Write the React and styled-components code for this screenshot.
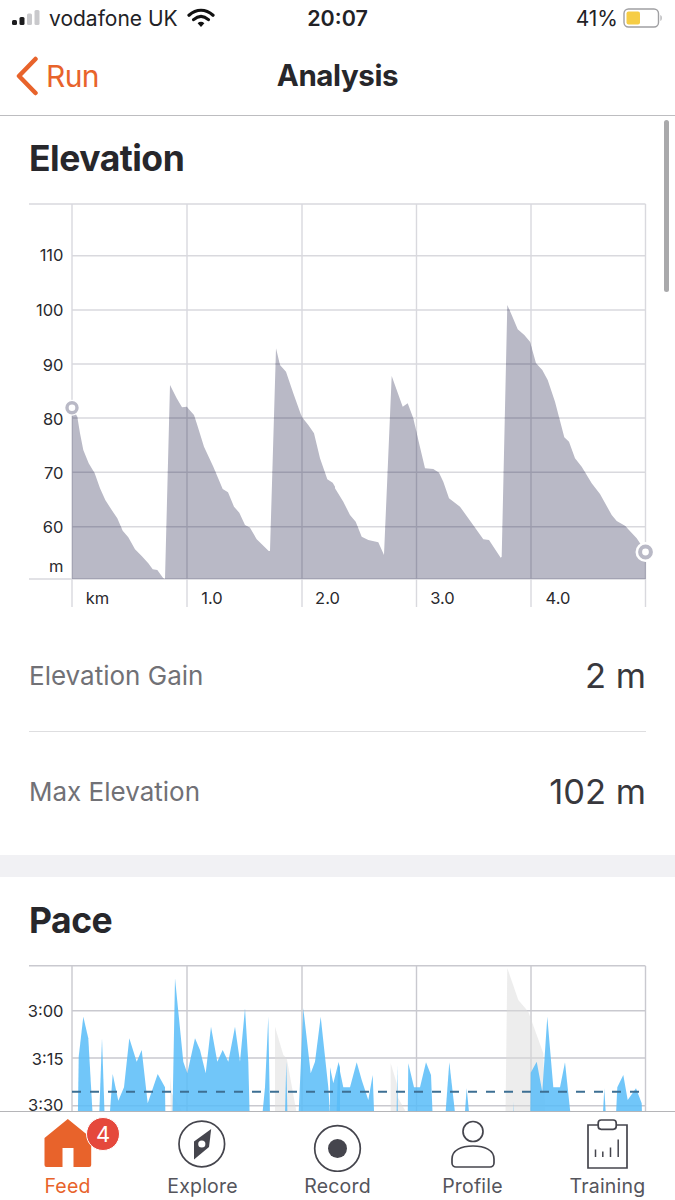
import React from "react";
import styled, { createGlobalStyle } from "styled-components";

const Global = createGlobalStyle`
  html, body { margin: 0; padding: 0; background: #fff; }
  body { font-family: Inter, "Liberation Sans", sans-serif; }
`;

const ORANGE = "#e8632b";
const INK = "#45454d";

const Page = styled.div`
  position: relative;
  width: 675px;
  height: 1200px;
  display: flex;
  flex-direction: column;
  overflow: hidden;
  background: #fff;
`;
const StatusBar = styled.div`
  height: 39px;
  box-sizing: border-box;
  display: grid;
  grid-template-columns: 1fr auto 1fr;
  align-items: center;
  padding: 0 12px 3px;
  font-size: 21px;
  color: #222226;
`;
const StatusLeft = styled.div`
  display: flex;
  align-items: center;
  gap: 9px;
`;
const StatusRight = styled.div`
  display: flex;
  align-items: center;
  justify-content: flex-end;
  gap: 5px;
`;
const Clock = styled.div`
  font-weight: 600;
  font-size: 21.5px;
`;
const NavBar = styled.div`
  height: 76px;
  box-sizing: content-box;
  display: grid;
  grid-template-columns: 1fr auto 1fr;
  align-items: center;
  padding: 0 14px;
  border-bottom: 1px solid #bdbdc0;
`;
const Back = styled.div`
  display: flex;
  align-items: center;
  gap: 8px;
  color: ${ORANGE};
  font-size: 30px;
  letter-spacing: -0.6px;
  margin-bottom: 2px;
`;
const NavTitle = styled.div`
  font-size: 29.5px;
  font-weight: 700;
  color: #27272b;
  letter-spacing: -0.4px;
  margin-bottom: 4px;
`;
const Main = styled.main`
  flex: 1;
  min-height: 0;
  overflow: hidden;
`;
const Title = styled.h2`
  margin: 0;
  height: 84px;
  box-sizing: border-box;
  padding: ${(p) => (p.$lower ? "21px" : "20px")} 29px 0;
  font-size: 35.5px;
  line-height: 46px;
  font-weight: 700;
  color: #27272b;
  letter-spacing: -0.5px;
`;
const ChartSvg = styled.svg`
  display: block;
  width: 675px;
`;
const AxisText = styled.text`
  font-family: Inter, "Liberation Sans", sans-serif;
  font-size: 16.5px;
  fill: #2a2a2e;
`;
const Stats = styled.div`
  margin: 6px 29px 0;
`;
const Stat = styled.div`
  height: 116px;
  box-sizing: border-box;
  display: flex;
  align-items: center;
  justify-content: space-between;
  padding-top: 3px;
  border-bottom: ${(p) => (p.$last ? "none" : "1px solid #dedee0")};
`;
const StatLabel = styled.span`
  font-size: 26px;
  color: #717176;
`;
const StatValue = styled.span`
  font-size: 34.5px;
  color: #38383d;
`;
const Band = styled.div`
  height: 22px;
  margin-top: 7px;
  background: #f1f1f4;
`;
const Scroll = styled.div`
  position: absolute;
  left: 664px;
  top: 120px;
  width: 5px;
  height: 172px;
  border-radius: 3px;
  background: #a9a9ab;
`;
const TabBar = styled.nav`
  height: 89px;
  box-sizing: border-box;
  border-top: 1px solid #b5b5b8;
  background: #fff;
  display: grid;
  grid-template-columns: repeat(5, 135px);
`;
const Tab = styled.div`
  position: relative;
  display: flex;
  flex-direction: column;
  align-items: center;
  padding-top: 4px;
  color: ${(p) => (p.$active ? ORANGE : "#55555c")};
`;
const TabIcon = styled.svg`
  display: block;
  width: 64px;
  height: 56px;
  margin-bottom: 2px;
`;
const TabLabel = styled.span`
  font-size: 19.5px;
  line-height: 24px;
  letter-spacing: 0.2px;
`;
const Badge = styled.span`
  position: absolute;
  left: 86px;
  top: 5px;
  width: 34px;
  height: 34px;
  box-sizing: border-box;
  border-radius: 50%;
  background: #e5483c;
  border: 1px solid #fff;
  color: #fff;
  font-size: 22px;
  display: flex;
  align-items: center;
  justify-content: center;
`;

const L = (x, y, oy) => [x / 3, y / 3 + oy];
const R = (x, y, oy) => [x / 3 + 335, y / 3 + oy];
const pts = (list) => list.map((p) => p.map((n) => n.toFixed(1)).join(",")).join(" ");

const elevationLeft = [[216,652],[232,680],[240,730],[250,780],[266,820],[284,850],[300,895],[316,930],[335,960],[352,985],[368,1022],[385,1042],[405,1078],[425,1098],[445,1120],[458,1138],[472,1140],[490,1165],[495,1167],[510,585],[530,625],[546,652],[560,650],[582,675],[590,700],[612,770],[640,830],[668,897],[684,907],[702,950],[718,968],[735,1005],[750,1013],[770,1048],[806,1083],[810,1083],[828,475],[840,525],[858,545],[880,610],[905,680],[925,705],[942,730],[960,805],[982,868],[998,878],[1005,890]];
const elevationRight = [[0,895],[25,935],[45,975],[62,995],[80,1040],[100,1050],[130,1057],[147,1095],[170,558],[185,600],[203,650],[218,640],[235,685],[250,750],[270,835],[295,837],[312,848],[325,875],[342,925],[375,950],[400,985],[445,1048],[462,1050],[497,1103],[500,1100],[517,345],[530,375],[548,418],[568,435],[585,455],[603,520],[622,540],[638,570],[660,635],[688,742],[702,755],[720,805],[740,830],[770,880],[795,912],[830,975],[845,993],[870,1007],[905,1045],[932,1085],[932,1167]];
const elevationArea = pts([...elevationLeft.map(([x, y]) => L(x, y, 190)), ...elevationRight.map(([x, y]) => R(x, y, 190)), [72, 579]]);

const B = 620;
const paceBlueLeft = [
  [[232,B],[236,320],[250,200],[265,265],[285,B]],
  [[293,B],[306,265],[318,B]],
  [[320,B],[338,372],[355,452],[372,412],[388,265],[410,335],[425,300],[443,460],[473,372],[495,412],[498,B]],
  [[515,B],[525,85],[550,335],[562,370],[585,265],[600,300],[617,370],[633,230],[652,335],[668,300],[685,335],[705,230],[720,335],[735,175],[745,335],[752,B]],
  [[775,B],[795,412],[805,200],[812,B]],
  [[852,B],[859,335],[865,B]],
  [[890,B],[910,175],[932,370],[945,335],[962,200],[985,412],[998,B]],
  [[1005,B],[1015,335],[1020,352],[1020,B]],
];
const paceBlueRight = [
  [[-15,B],[-15,352],[-5,400],[10,340],[25,412],[45,412],[65,337],[80,390],[100,450],[113,375],[122,B]],
  [[183,B],[187,345],[190,B]],
  [[217,B],[220,340],[237,412],[255,412],[273,337],[288,375],[298,B]],
  [[322,B],[343,337],[375,B]],
  [[380,B],[395,415],[415,B]],
  [[533,B],[536,455],[540,B]],
  [[585,B],[587,368],[605,335],[622,425],[637,200],[655,412],[675,412],[690,337],[720,B]],
  [[797,B],[808,415],[820,B]],
  [[837,B],[847,412],[865,375],[878,450],[903,415],[920,460],[925,B]],
];
const paceGrey = [
  pts([[510,380],[515,430],[550,490],[515,B]].map(([x, y]) => L(x, y, 950))),
  pts([[825,B],[825,230],[850,315],[860,325],[890,490],[890,B]].map(([x, y]) => L(x, y, 950))),
  pts([[167,B],[167,340],[185,400],[190,445],[215,490],[215,B]].map(([x, y]) => R(x, y, 950))),
  pts([[510,B],[517,55],[550,150],[580,185],[625,310],[630,480],[630,B]].map(([x, y]) => R(x, y, 950))),
];

const vLines = [72, 187, 302, 416.5, 531, 645.5];
const eleH = [[204, 29], [255.7, 72], [310, 72], [364, 72], [418, 72], [472.3, 72], [526.7, 72], [579, 29]];
const eleLabels = [["110", 256.5], ["100", 311.5], ["90", 366], ["80", 420], ["70", 474.5], ["60", 528.5], ["m", 567]];
const kmLabels = [["km", 97.5], ["1.0", 212], ["2.0", 327.5], ["3.0", 442.5], ["4.0", 558]];
const paceH = [[965.7, 29], [1010.7, 72], [1058, 72], [1105.7, 72]];
const paceLabels = [["3:00", 1012], ["3:15", 1060], ["3:30", 1106]];

function Grid({ hs, top, bottom, color }) {
  return (
    <g stroke={color} strokeWidth="1.4" fill="none">
      {hs.map(([y, x]) => <line key={y} x1={x} x2="645.5" y1={y} y2={y} />)}
      {vLines.map((x) => <line key={x} x1={x} x2={x} y1={top} y2={bottom} />)}
    </g>
  );
}

function ElevationChart() {
  return (
    <ChartSvg viewBox="0 200 675 410" height="410">
      <defs>
        <clipPath id="eleClip"><polygon points={elevationArea} /></clipPath>
      </defs>
      <Grid hs={eleH} top={204} bottom={607} color="#d9d9de" />
      <polygon points={elevationArea} fill="#b9b9c6" />
      <g clipPath="url(#eleClip)">
        <Grid hs={eleH} top={204} bottom={607} color="#9c9cad" />
      </g>
      {eleLabels.map(([t, y]) => (
        <AxisText key={t} x="63.5" y={y} textAnchor="end" dominantBaseline="middle">{t}</AxisText>
      ))}
      {kmLabels.map(([t, x]) => (
        <AxisText key={t} x={x} y="599.5" textAnchor="middle" dominantBaseline="middle">{t}</AxisText>
      ))}
      <circle cx="72" cy="407.7" r="8" fill="#fff" />
      <circle cx="72" cy="407.7" r="5" fill="none" stroke="#b9b9c6" strokeWidth="3.4" />
      <circle cx="645.5" cy="552" r="10" fill="#fff" />
      <circle cx="645.5" cy="552" r="5.4" fill="none" stroke="#b9b9c6" strokeWidth="4" />
    </ChartSvg>
  );
}

function PaceChart() {
  return (
    <ChartSvg viewBox="0 961 675 150" height="150">
      <Grid hs={paceH} top={966} bottom={1120} color="#c9c9cf" />
      {paceGrey.map((p, i) => <polygon key={i} points={p} fill="#dcdcdc" fillOpacity="0.5" />)}
      <g fill="#58bcf8" fillOpacity="0.85">
        {paceBlueLeft.map((p, i) => <polygon key={i} points={pts(p.map(([x, y]) => L(x, y, 950)))} />)}
        {paceBlueRight.map((p, i) => <polygon key={i} points={pts(p.map(([x, y]) => R(x, y, 950)))} />)}
      </g>
      <line x1="72" x2="639" y1="1091.7" y2="1091.7" stroke="#3d6f93" strokeWidth="2" strokeDasharray="9 9" />
      {paceLabels.map(([t, y]) => (
        <AxisText key={t} x="63.5" y={y} textAnchor="end" dominantBaseline="middle">{t}</AxisText>
      ))}
    </ChartSvg>
  );
}

const iconBox = (cx) => `${cx - 32} 1116 64 56`;

export default function App() {
  return (
    <Page>
      <Global />
      <StatusBar>
        <StatusLeft>
          <svg width="28" height="16" viewBox="0 0 28 16">
            <rect x="0" y="10" width="5" height="5" rx="1.5" fill="#1c1c1e" />
            <rect x="7.5" y="7" width="5" height="8" rx="1.5" fill="#1c1c1e" />
            <rect x="15" y="3.5" width="5" height="11.5" rx="1.5" fill="#c9c9cc" />
            <rect x="22.5" y="0" width="5" height="15" rx="1.5" fill="#c9c9cc" />
          </svg>
          <span>vodafone UK</span>
          <svg width="28" height="20" viewBox="0 0 28 20">
            <path d="M2 7.2C9.5 .6 18.5 .6 26 7.2M6.6 11.6c4.8-4.1 10-4.1 14.8 0" fill="none" stroke="#111" strokeWidth="3.2" strokeLinecap="round" />
            <path d="M10.6 15.2c2.2-1.9 4.6-1.9 6.8 0L14 19z" fill="#111" />
          </svg>
        </StatusLeft>
        <Clock>20:07</Clock>
        <StatusRight>
          <span>41%</span>
          <svg width="40" height="20" viewBox="0 0 40 20">
            <rect x="1" y="1" width="34.5" height="18" rx="4.5" fill="none" stroke="#a0a0a3" strokeWidth="1.4" />
            <rect x="3.5" y="3.5" width="13.5" height="13" rx="2" fill="#f6cd45" />
            <path d="M37.5 7c1.5.5 1.5 5.5 0 6z" fill="#a0a0a3" />
          </svg>
        </StatusRight>
      </StatusBar>
      <NavBar>
        <Back>
          <svg width="24" height="40" viewBox="0 0 24 40">
            <path d="M21.5 3 5 20l16.500 17" fill="none" stroke={ORANGE} strokeWidth="4.5" strokeLinecap="round" strokeLinejoin="round" />
          </svg>
          <span>Run</span>
        </Back>
        <NavTitle>Analysis</NavTitle>
      </NavBar>
      <Main>
        <Title>Elevation</Title>
        <ElevationChart />
        <Stats>
          <Stat>
            <StatLabel>Elevation Gain</StatLabel>
            <StatValue>2 m</StatValue>
          </Stat>
          <Stat $last>
            <StatLabel>Max Elevation</StatLabel>
            <StatValue>102 m</StatValue>
          </Stat>
        </Stats>
        <Band />
        <Title $lower>Pace</Title>
        <PaceChart />
      </Main>
      <TabBar>
        <Tab $active>
          <TabIcon viewBox={iconBox(67.5)}>
            <path d="M67.3 1119 90.7 1138V1165a2 2 0 0 1-2 2H73V1148H62V1167H46a2 2 0 0 1-2-2V1138Z" fill={ORANGE} />
          </TabIcon>
          <Badge>4</Badge>
          <TabLabel>Feed</TabLabel>
        </Tab>
        <Tab>
          <TabIcon viewBox={iconBox(202.5)}>
            <circle cx="201.3" cy="1144" r="22.8" fill="none" stroke={INK} strokeWidth="1.7" />
            <path d="M210.7 1129 193.5 1141.5V1159.5L208.5 1147Z" fill={INK} />
            <circle cx="201.3" cy="1144" r="3.6" fill="#fff" />
          </TabIcon>
          <TabLabel>Explore</TabLabel>
        </Tab>
        <Tab>
          <TabIcon viewBox={iconBox(337.5)}>
            <circle cx="337" cy="1148.5" r="22.8" fill="none" stroke={INK} strokeWidth="1.7" />
            <circle cx="337" cy="1148.5" r="9.5" fill={INK} />
          </TabIcon>
          <TabLabel>Record</TabLabel>
        </Tab>
        <Tab>
          <TabIcon viewBox={iconBox(472.5)}>
            <circle cx="472.5" cy="1131.5" r="10" fill="none" stroke={INK} strokeWidth="1.7" />
            <path d="M451.5 1159C451.5 1150 461 1146 472.5 1146S493.5 1150 493.5 1159V1163a4 4 0 0 1-4 4H455.5a4 4 0 0 1-4-4Z" fill="none" stroke={INK} strokeWidth="1.7" />
          </TabIcon>
          <TabLabel>Profile</TabLabel>
        </Tab>
        <Tab>
          <TabIcon viewBox={iconBox(607.5)}>
            <path d="M598 1125H587.5V1168H626.5V1125H616" fill="none" stroke={INK} strokeWidth="1.7" />
            <rect x="597.7" y="1120" width="18" height="9.3" rx="3" fill="#fff" stroke={INK} strokeWidth="1.7" />
            <path d="M595 1157V1149.5M602.3 1157V1151.5M610 1157V1147.5M617.7 1157V1139.5" fill="none" stroke={INK} strokeWidth="1.5" />
          </TabIcon>
          <TabLabel>Training</TabLabel>
        </Tab>
      </TabBar>
      <Scroll />
    </Page>
  );
}
